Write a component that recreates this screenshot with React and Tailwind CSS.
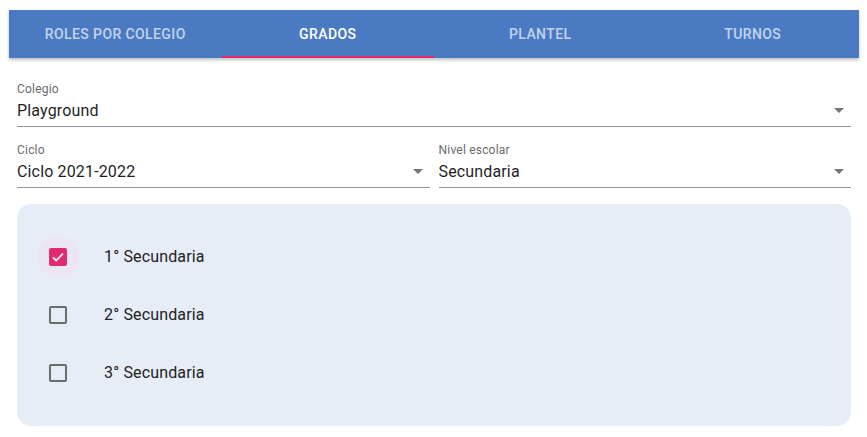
import React from 'react';

const tabs = ['Roles por colegio', 'Grados', 'Plantel', 'Turnos'];
const grados = [
    { label: '1° Secundaria', checked: true },
    { label: '2° Secundaria', checked: false },
    { label: '3° Secundaria', checked: false },
];

// dropdown arrow, same shape as the material one
const ArrowIcon = () => (
    <svg width="24" height="24" viewBox="0 0 24 24" className="shrink-0 fill-[#757575]">
        <path d="M7 10l5 5 5-5z" />
    </svg>
);

const SelectField = ({ label, value, className = '' }) => (
    <div className={`flex flex-col ${className}`}>
        <div className="h-[16px] leading-[16px] text-[12px] text-[#6b6b6b] tracking-[0.2px]">{label}</div>
        <div className="h-[30px] pt-[1px] flex items-start justify-between border-b border-[#949494]">
            <span className="leading-[23px] pt-[1px] text-[16px] text-[#1f1f1f] tracking-[0.15px]">{value}</span>
            <ArrowIcon />
        </div>
    </div>
);

const Checkbox = ({ checked }) => (
    <div className={`w-[42px] h-[42px] rounded-full flex items-center justify-center ${checked ? 'bg-[#ebe6f1]' : ''}`}>
        {checked ? (
            <div className="w-[18px] h-[18px] rounded-[2px] bg-[#e22b6f] flex items-center justify-center">
                <svg width="16" height="16" viewBox="0 0 24 24" fill="none" stroke="white" strokeWidth={2.6}>
                    <path d="M4.5 12.5l4.8 4.8L19.5 7" />
                </svg>
            </div>
        ) : (
            <div className="w-[18px] h-[18px] rounded-[2px] border-2 border-[#6b6b6b]" />
        )}
    </div>
);

export default function App() {
    return (
        <div className="w-[867px] h-[437px] bg-white pt-[10px] pl-[9px] pr-[8px] font-['Roboto',sans-serif] overflow-hidden">
            <div className="h-12 flex bg-[#4a7bc2] shadow-[0_2px_3px_rgba(0,0,0,0.25)]">
                {tabs.map((t, i) => (
                    <div
                        key={t}
                        className={`flex-1 flex items-center justify-center uppercase text-[14px] font-medium tracking-[0.4px] border-b-2 ${
                            i === 1 ? 'text-white border-[#e22b6f]' : 'text-[#c3d3ec] border-transparent'
                        }`}
                    >
                        <span className="pt-[2px]">{t}</span>
                    </div>
                ))}
            </div>

            <div className="px-[8px] pt-[23px]">
                <SelectField label="Colegio" value="Playground" />
                <div className="flex gap-[9px] mt-[15px]">
                    <SelectField label="Ciclo" value="Ciclo 2021-2022" className="flex-1" />
                    <SelectField label="Nivel escolar" value="Secundaria" className="flex-1" />
                </div>

                <div className="mt-[16px] h-[222px] rounded-[14px] bg-[#e7edf6] py-6 pl-[20px]">
                    {grados.map((g) => (
                        <div key={g.label} className="h-[58px] flex items-center gap-[25px]">
                            <Checkbox checked={g.checked} />
                            <span className="text-[16px] text-[#222] tracking-[0.15px]">{g.label}</span>
                        </div>
                    ))}
                </div>
            </div>
        </div>
    );
}
